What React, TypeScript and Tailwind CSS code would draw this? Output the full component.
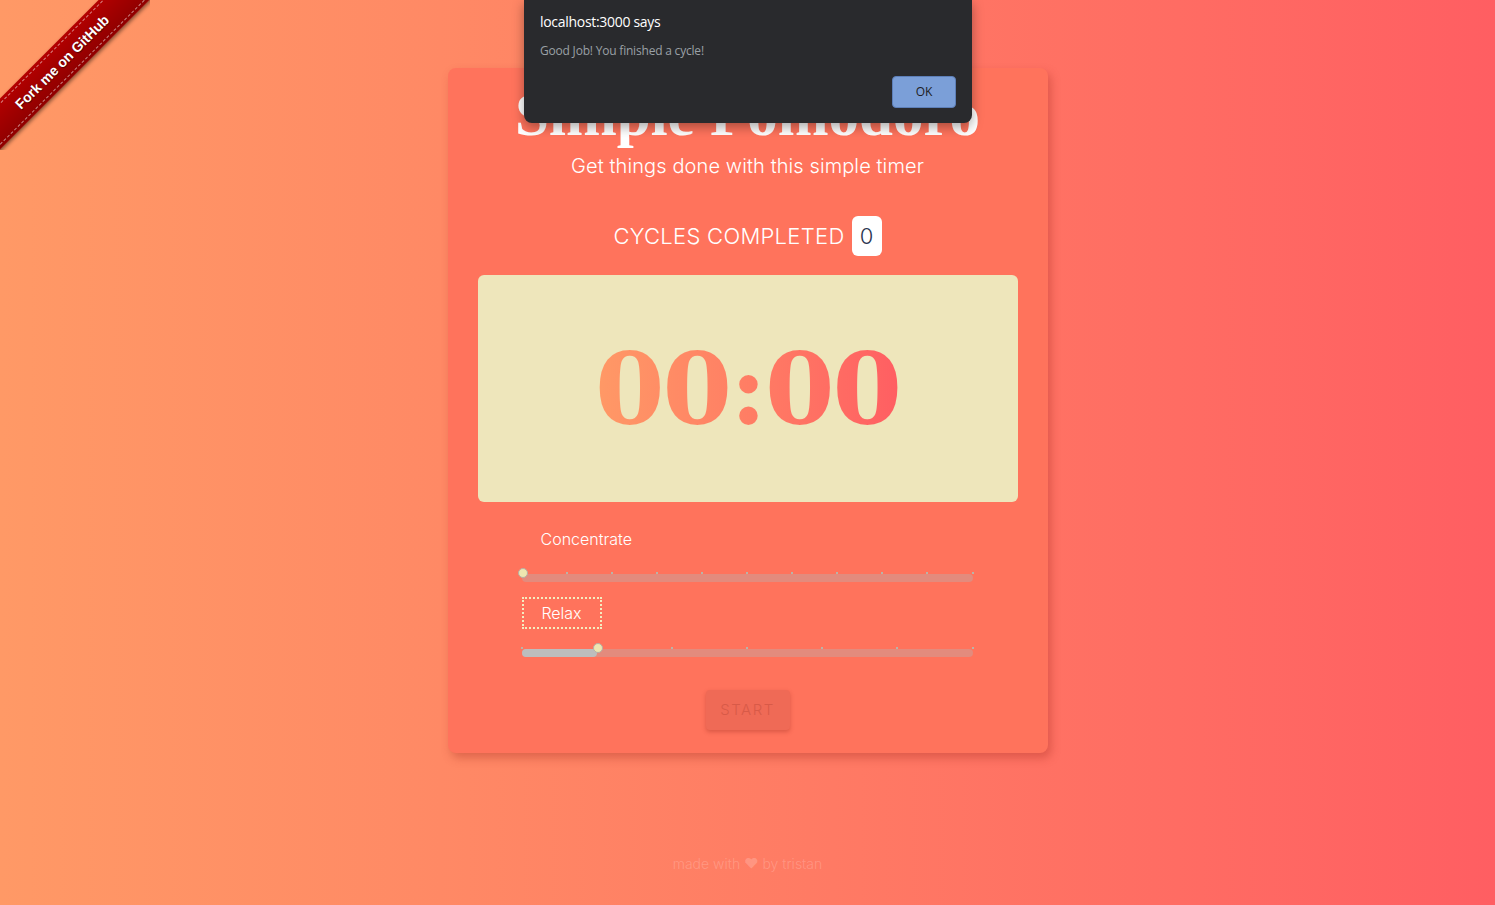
import { useState } from 'react';

const bodyFont = "font-['Inter','Noto_Sans',sans-serif]";

function Ribbon() {
  return (
    <div className="absolute top-0 left-0 w-[150px] h-[150px] overflow-hidden z-10 pointer-events-none">
      <div className="absolute left-[-50px] top-[44px] w-[224px] h-[36px] -rotate-45 bg-linear-to-b from-[#b30000] to-[#8f0000] shadow-[0_2px_4px_rgba(0,0,0,0.45)] flex items-center">
        <div className="w-full h-[30px] border-y border-dashed border-white/50 flex items-center justify-center">
          <span className="font-['Liberation_Sans',Arial,sans-serif] font-bold text-[14px] text-white [text-shadow:0_1px_1px_rgba(0,0,0,0.6)]">
            Fork me on GitHub
          </span>
        </div>
      </div>
    </div>
  );
}

function Alert() {
  return (
    <div className="absolute top-0 left-[524px] w-[448px] h-[123px] bg-[#292a2d] rounded-b-lg shadow-[0_4px_12px_rgba(0,0,0,0.35)] z-20 px-4 pt-[11px] font-['Open_Sans','Noto_Sans',sans-serif]">
      <div className="text-[14px] text-white tracking-[-0.3px]">localhost:3000 says</div>
      <div className="mt-[10px] text-[12px] text-[#9aa0a6] tracking-[-0.2px]">Good Job! You finished a cycle!</div>
      <div className="flex justify-end mt-[16px]">
        <button className="w-[64px] h-[32px] rounded bg-[#7b9fd8] text-[12px] text-[#202124] border border-[#5d7fb8]">OK</button>
      </div>
    </div>
  );
}

function Slider({ steps, value }: { steps: number; value: number }) {
  const ticks = Array.from({ length: steps + 1 }, (_, i) => i);
  const pct = (value / steps) * 100;
  return (
    <div className="relative h-[10px] w-[451px]">
      <div className="absolute left-0 right-0 top-[2px] h-[8px] rounded-full bg-[#e38b7d]" />
      <div className="absolute left-0 top-[2px] h-[8px] rounded-full bg-[#bdbdbd]" style={{ width: `${pct}%` }} />
      {ticks.map((t) => (
        <div
          key={t}
          className="absolute top-0 w-[2px] h-[2px] bg-[#b9b4a8]"
          style={{ left: `calc(${(t / steps) * 100}% - 1px)` }}
        />
      ))}
      <div
        className="absolute top-[-4px] w-[10px] h-[10px] rounded-full bg-[#eee6b0] border border-[#b5b0a5]"
        style={{ left: `calc(${pct}% - 4px)` }}
      />
    </div>
  );
}

export default function App() {
  const [cycles] = useState(0);

  return (
    <div className={`relative min-h-[905px] w-full overflow-hidden bg-linear-to-r from-[#ff9966] to-[#ff5e62] flex flex-col items-center ${bodyFont}`}>
      <Ribbon />
      <Alert />

      <div className="mt-[68px] w-[600px] rounded-lg bg-[#ff735c] shadow-[3px_5px_10px_rgba(160,40,30,0.35)] flex flex-col items-center pt-[16px] pb-[23px]">
        <h1 className="font-['Liberation_Serif','Times_New_Roman',serif] font-bold text-[61px] leading-[61px] text-white">
          Simple Pomodoro
        </h1>
        <p className="mt-[6px] text-[20px] leading-[30px] font-light text-white tracking-[0.1px]">
          Get things done with this simple timer
        </p>

        <div className="mt-[35px] flex items-center gap-[7px]">
          <span className="text-[22px] font-light text-white tracking-[0.3px]">CYCLES COMPLETED</span>
          <span className="w-[30px] h-[40px] rounded-md bg-white flex items-center justify-center text-[22px] font-light text-[#2a3550]">
            {cycles}
          </span>
        </div>

        <div className="mt-[19px] w-[540px] h-[227px] rounded-md bg-[#eee6bb] flex items-center justify-center">
          <span className="font-['DejaVu_Serif',serif] font-bold text-[100px] tracking-[-2px] leading-none bg-linear-to-r from-[#ff9966] to-[#ff5e62] bg-clip-text text-transparent">
            00:00
          </span>
        </div>

        <div className="w-full px-[74px] mt-[25px] flex flex-col">
          <div className="pl-[19px] text-[16px] leading-[24px] font-light text-white">Concentrate</div>
          <div className="mt-[21px]">
            <Slider steps={10} value={0} />
          </div>
          <div className="mt-[15px] w-[80px] h-[32px] border-2 border-dotted border-[#f4ecc0] flex items-center justify-center text-[16px] font-light text-white">
            Relax
          </div>
          <div className="mt-[18px]">
            <Slider steps={6} value={1} />
          </div>
        </div>

        <button className="mt-[33px] w-[84px] h-[40px] rounded bg-[#ef6a56] shadow-[0_2px_4px_rgba(150,40,30,0.35)] text-[15px] font-light tracking-[1.5px] text-[#d85a48]">
          START
        </button>
      </div>

      <div className="mt-[100px] text-[14px] font-light text-white/20">
        made with ♥ by tristan
      </div>
    </div>
  );
}
